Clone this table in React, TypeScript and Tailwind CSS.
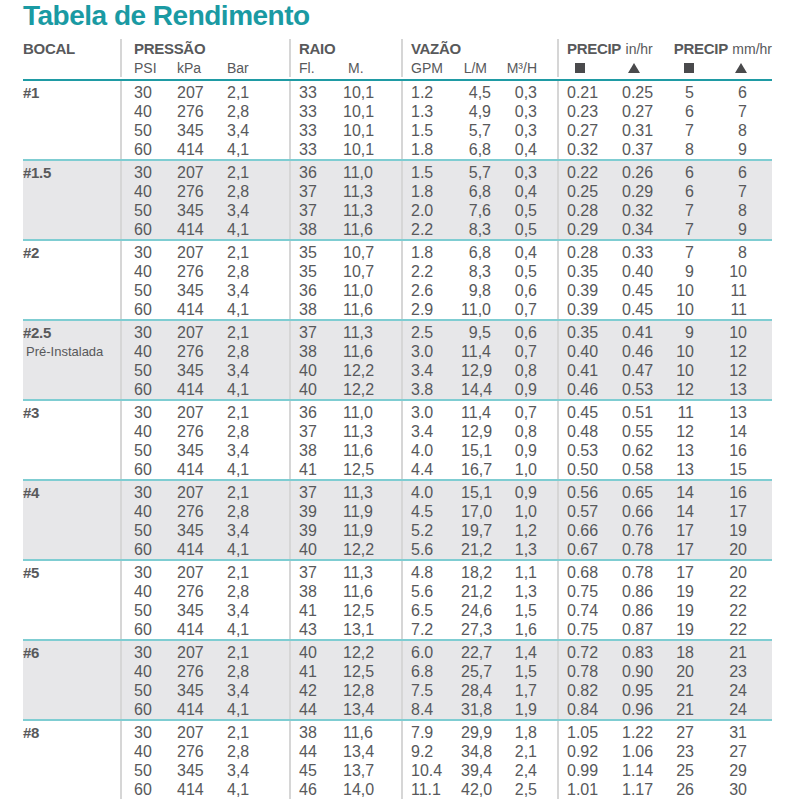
const pressures = [
  ["30", "207", "2,1"],
  ["40", "276", "2,8"],
  ["50", "345", "3,4"],
  ["60", "414", "4,1"],
];

type Group = {
  name: string;
  note?: string;
  shaded?: boolean;
  // raio fl, raio m, gpm, l/m, m3/h, in/hr sq, in/hr tri, mm/hr sq, mm/hr tri
  rows: string[][];
};

const groups: Group[] = [
  {
    name: "#1",
    rows: [
      ["33", "10,1", "1.2", "4,5", "0,3", "0.21", "0.25", "5", "6"],
      ["33", "10,1", "1.3", "4,9", "0,3", "0.23", "0.27", "6", "7"],
      ["33", "10,1", "1.5", "5,7", "0,3", "0.27", "0.31", "7", "8"],
      ["33", "10,1", "1.8", "6,8", "0,4", "0.32", "0.37", "8", "9"],
    ],
  },
  {
    name: "#1.5",
    shaded: true,
    rows: [
      ["36", "11,0", "1.5", "5,7", "0,3", "0.22", "0.26", "6", "6"],
      ["37", "11,3", "1.8", "6,8", "0,4", "0.25", "0.29", "6", "7"],
      ["37", "11,3", "2.0", "7,6", "0,5", "0.28", "0.32", "7", "8"],
      ["38", "11,6", "2.2", "8,3", "0,5", "0.29", "0.34", "7", "9"],
    ],
  },
  {
    name: "#2",
    rows: [
      ["35", "10,7", "1.8", "6,8", "0,4", "0.28", "0.33", "7", "8"],
      ["35", "10,7", "2.2", "8,3", "0,5", "0.35", "0.40", "9", "10"],
      ["36", "11,0", "2.6", "9,8", "0,6", "0.39", "0.45", "10", "11"],
      ["38", "11,6", "2.9", "11,0", "0,7", "0.39", "0.45", "10", "11"],
    ],
  },
  {
    name: "#2.5",
    note: "Pré-Instalada",
    shaded: true,
    rows: [
      ["37", "11,3", "2.5", "9,5", "0,6", "0.35", "0.41", "9", "10"],
      ["38", "11,6", "3.0", "11,4", "0,7", "0.40", "0.46", "10", "12"],
      ["40", "12,2", "3.4", "12,9", "0,8", "0.41", "0.47", "10", "12"],
      ["40", "12,2", "3.8", "14,4", "0,9", "0.46", "0.53", "12", "13"],
    ],
  },
  {
    name: "#3",
    rows: [
      ["36", "11,0", "3.0", "11,4", "0,7", "0.45", "0.51", "11", "13"],
      ["37", "11,3", "3.4", "12,9", "0,8", "0.48", "0.55", "12", "14"],
      ["38", "11,6", "4.0", "15,1", "0,9", "0.53", "0.62", "13", "16"],
      ["41", "12,5", "4.4", "16,7", "1,0", "0.50", "0.58", "13", "15"],
    ],
  },
  {
    name: "#4",
    shaded: true,
    rows: [
      ["37", "11,3", "4.0", "15,1", "0,9", "0.56", "0.65", "14", "16"],
      ["39", "11,9", "4.5", "17,0", "1,0", "0.57", "0.66", "14", "17"],
      ["39", "11,9", "5.2", "19,7", "1,2", "0.66", "0.76", "17", "19"],
      ["40", "12,2", "5.6", "21,2", "1,3", "0.67", "0.78", "17", "20"],
    ],
  },
  {
    name: "#5",
    rows: [
      ["37", "11,3", "4.8", "18,2", "1,1", "0.68", "0.78", "17", "20"],
      ["38", "11,6", "5.6", "21,2", "1,3", "0.75", "0.86", "19", "22"],
      ["41", "12,5", "6.5", "24,6", "1,5", "0.74", "0.86", "19", "22"],
      ["43", "13,1", "7.2", "27,3", "1,6", "0.75", "0.87", "19", "22"],
    ],
  },
  {
    name: "#6",
    shaded: true,
    rows: [
      ["40", "12,2", "6.0", "22,7", "1,4", "0.72", "0.83", "18", "21"],
      ["41", "12,5", "6.8", "25,7", "1,5", "0.78", "0.90", "20", "23"],
      ["42", "12,8", "7.5", "28,4", "1,7", "0.82", "0.95", "21", "24"],
      ["44", "13,4", "8.4", "31,8", "1,9", "0.84", "0.96", "21", "24"],
    ],
  },
  {
    name: "#8",
    rows: [
      ["38", "11,6", "7.9", "29,9", "1,8", "1.05", "1.22", "27", "31"],
      ["44", "13,4", "9.2", "34,8", "2,1", "0.92", "1.06", "23", "27"],
      ["45", "13,7", "10.4", "39,4", "2,4", "0.99", "1.14", "25", "29"],
      ["46", "14,0", "11.1", "42,0", "2,5", "1.01", "1.17", "26", "30"],
    ],
  },
];

const sep = "border-l-2 border-[#d6d6d6]";

function Square() {
  return <span className="inline-block h-[10px] w-[10px] bg-[#4a4a4c]" />;
}

function Triangle() {
  return (
    <svg width="12" height="10" viewBox="0 0 12 10" className="inline-block">
      <polygon points="6,0 12,10 0,10" fill="#4a4a4c" />
    </svg>
  );
}

function Header() {
  return (
    <div className="mt-[6px] flex border-b-2 border-[#1f9ba4] pb-[2px] pt-px">
      {/* Bocal */}
      <div className="w-[97px]">
        <div className="h-[20px] text-[15px] font-bold leading-[20px] tracking-[-0.3px]">BOCAL</div>
      </div>

      {/* Pressão */}
      <div className={`w-[169px] pl-[12px] ${sep}`}>
        <div className="h-[20px] text-[15px] font-bold leading-[20px] tracking-[-0.3px]">PRESSÃO</div>
        <div className="flex h-[18px] text-[14px] leading-[18px]">
          <span className="w-[43px]">PSI</span>
          <span className="w-[50px]">kPa</span>
          <span>Bar</span>
        </div>
      </div>

      {/* Raio */}
      <div className={`w-[112px] pl-[8px] ${sep}`}>
        <div className="h-[20px] text-[15px] font-bold leading-[20px] tracking-[-0.3px]">RAIO</div>
        <div className="flex h-[18px] text-[14px] leading-[18px]">
          <span className="w-[44px]">Fl.</span>
          <span className="pl-[5px]">M.</span>
        </div>
      </div>

      {/* Vazão */}
      <div className={`w-[156px] pl-[8px] ${sep}`}>
        <div className="h-[20px] text-[15px] font-bold leading-[20px] tracking-[-0.3px]">VAZÃO</div>
        <div className="flex h-[18px] text-[14px] leading-[18px]">
          <span className="w-[50px]">GPM</span>
          <span className="w-[30px] pr-[4px] text-right">L/M</span>
          <span className="w-[46px] text-right">M³/H</span>
        </div>
      </div>

      {/* Precip */}
      <div className={`w-[215px] pl-[8px] ${sep}`}>
        <div className="flex h-[20px] items-baseline leading-[20px]">
          <span className="w-[107px] whitespace-nowrap">
            <span className="text-[15px] font-bold tracking-[-0.3px]">PRECIP</span>{" "}
            <span className="text-[14px]">in/hr</span>
          </span>
          <span className="whitespace-nowrap">
            <span className="text-[15px] font-bold tracking-[-0.3px]">PRECIP</span>{" "}
            <span className="text-[14px]">mm/hr</span>
          </span>
        </div>
        <div className="flex h-[18px] items-center">
          <span className="flex w-[55px] pl-[8px]">
            <Square />
          </span>
          <span className="flex w-[38px] pl-[6px]">
            <Triangle />
          </span>
          <span className="flex w-[34px] justify-end">
            <Square />
          </span>
          <span className="flex w-[53px] justify-end">
            <Triangle />
          </span>
        </div>
      </div>
    </div>
  );
}

function GroupBlock({ g, last }: { g: Group; last: boolean }) {
  return (
    <div
      className={`flex text-[16px] leading-[19px] ${g.shaded ? "bg-[#e7e7e9]" : ""} ${
        last ? "" : "border-b-2 border-[#7fcdd2]"
      }`}
    >
      <div className="w-[97px] pt-[2px]">
        <div className="h-[19px] text-[15px] font-bold tracking-[-0.3px]">{g.name}</div>
        {g.note && <div className="h-[19px] pl-[3px] text-[13px]">{g.note}</div>}
      </div>

      <div className={`w-[169px] pl-[12px] pt-[2px] ${sep}`}>
        {pressures.map((p, i) => (
          <div key={i} className="flex h-[19px]">
            <span className="w-[43px]">{p[0]}</span>
            <span className="w-[50px]">{p[1]}</span>
            <span>{p[2]}</span>
          </div>
        ))}
      </div>

      <div className={`w-[112px] pl-[8px] pt-[2px] ${sep}`}>
        {g.rows.map((r, i) => (
          <div key={i} className="flex h-[19px]">
            <span className="w-[44px]">{r[0]}</span>
            <span>{r[1]}</span>
          </div>
        ))}
      </div>

      <div className={`w-[156px] pl-[8px] pt-[2px] ${sep}`}>
        {g.rows.map((r, i) => (
          <div key={i} className="flex h-[19px]">
            <span className="w-[50px]">{r[2]}</span>
            <span className="w-[30px] text-right">{r[3]}</span>
            <span className="w-[46px] text-right">{r[4]}</span>
          </div>
        ))}
      </div>

      <div className={`w-[215px] pl-[8px] pt-[2px] ${sep}`}>
        {g.rows.map((r, i) => (
          <div key={i} className="flex h-[19px]">
            <span className="w-[55px]">{r[5]}</span>
            <span className="w-[38px]">{r[6]}</span>
            <span className="w-[34px] text-right">{r[7]}</span>
            <span className="w-[53px] text-right">{r[8]}</span>
          </div>
        ))}
      </div>
    </div>
  );
}

export default function App() {
  return (
    <div className="h-[800px] w-[800px] overflow-hidden bg-white font-['Liberation_Sans',Arial,sans-serif] text-[#58595b]">
      <div className="w-[772px] pl-[23px]">
        <h1 className="h-[32px] text-[28px] font-bold leading-[32px] tracking-[-0.5px] text-[#1a9aa3]">
          Tabela de Rendimento
        </h1>
        <Header />
        {groups.map((g, i) => (
          <GroupBlock key={g.name} g={g} last={i === groups.length - 1} />
        ))}
      </div>
    </div>
  );
}
